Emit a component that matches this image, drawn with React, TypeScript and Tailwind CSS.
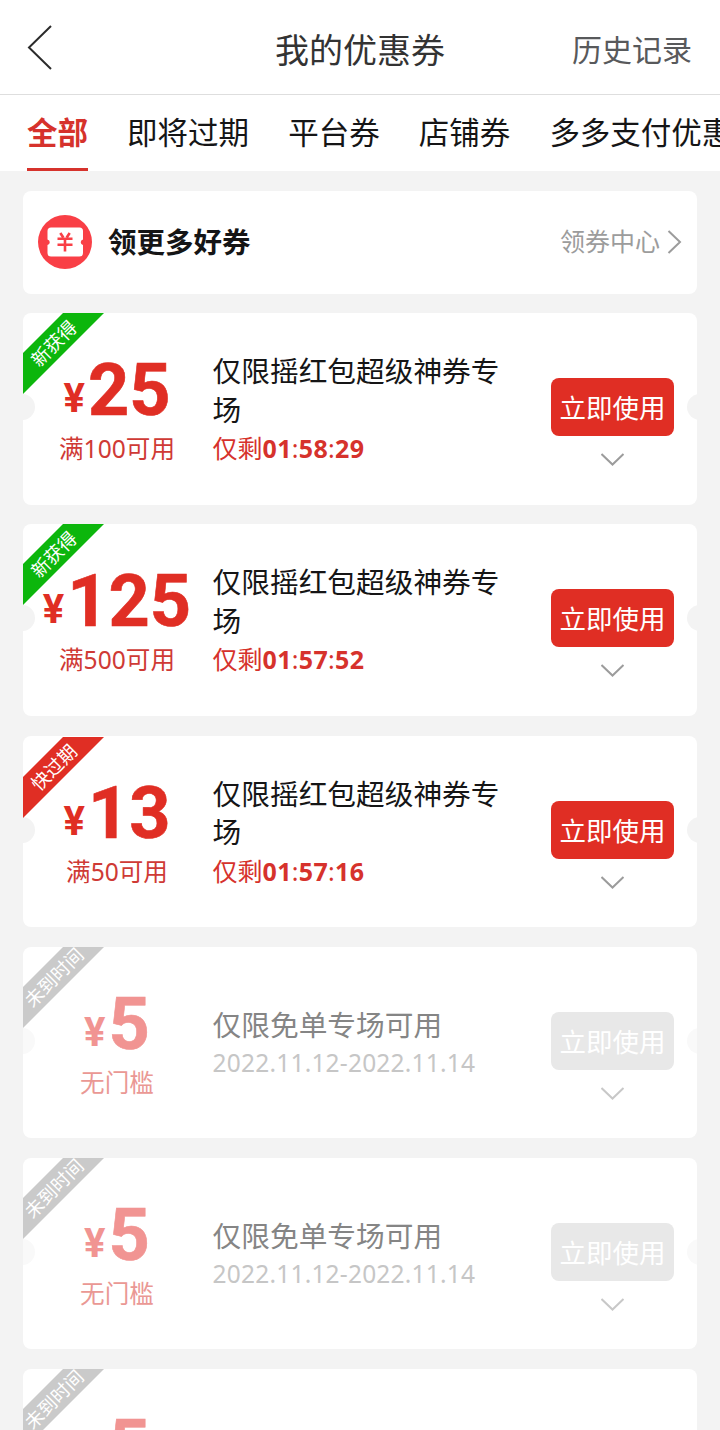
import { clsx } from 'clsx'

type Status = 'new' | 'expiring' | 'pending'

interface Coupon {
	id: number
	status: Status
	amount: string
	condition: string
	title: string
	countdown?: string
	period?: string
}

const TABS = ['全部', '即将过期', '平台券', '店铺券', '多多支付优惠']

const RIBBONS: Record<Status, { label: string; fill: string }> = {
	new: { label: '新获得', fill: 'fill-[#0cb60c]' },
	expiring: { label: '快过期', fill: 'fill-[#e02e24]' },
	pending: { label: '未到时间', fill: 'fill-[#cacaca]' },
}

const PENDING = {
	status: 'pending' as const,
	amount: '5',
	condition: '无门槛',
	title: '仅限免单专场可用',
	period: '2022.11.12-2022.11.14',
}

const COUPONS: Coupon[] = [
	{
		id: 1,
		status: 'new',
		amount: '25',
		condition: '满100可用',
		title: '仅限摇红包超级神券专场',
		countdown: '01:58:29',
	},
	{
		id: 2,
		status: 'new',
		amount: '125',
		condition: '满500可用',
		title: '仅限摇红包超级神券专场',
		countdown: '01:57:52',
	},
	{
		id: 3,
		status: 'expiring',
		amount: '13',
		condition: '满50可用',
		title: '仅限摇红包超级神券专场',
		countdown: '01:57:16',
	},
	{ id: 4, ...PENDING },
	{ id: 5, ...PENDING },
	{ id: 6, ...PENDING },
]

function Header() {
	return (
		<header className="grid h-[95px] grid-cols-[1fr_auto_1fr] items-center border-b border-[#dedede] bg-white pt-1.5 pr-7 pl-[27px]">
			<svg className="-mt-1.5 h-[46px] w-[27px]" viewBox="0 0 27 46" fill="none" stroke="#2b2b2b" strokeWidth="2">
				<path d="M24 2 2 23.500 24 45" />
			</svg>
			<h1 className="pl-px text-[34px] leading-none text-[#333]">我的优惠券</h1>
			<span className="justify-self-end text-[30px] leading-none text-[#58595b]">历史记录</span>
		</header>
	)
}

function Tabs() {
	return (
		<nav className="flex h-[76px] gap-[39.100px] overflow-hidden bg-white pl-[27px]">
			{TABS.map((tab, i) => (
				<button
					key={tab}
					type="button"
					className={clsx(
						'shrink-0 border-b-[3px] text-[30.500px] leading-[75px] whitespace-nowrap',
						i === 0 ? 'border-[#d6322c] font-bold text-[#d6322c]' : 'border-transparent text-[#151516]',
					)}
				>
					{tab}
				</button>
			))}
		</nav>
	)
}

function MoreCoupons() {
	return (
		<section className="flex h-[103px] items-center rounded-lg bg-white pr-[15px] pl-[15px]">
			<svg className="-mt-0.5 size-[54px]" viewBox="0 0 54 54" fill="none">
				<circle cx="27" cy="27" r="27" fill="#f93f46" />
				<path
					d="M13 12.500h28.500a3.500 3.500 0 0 1 3.500 3.500v8.500a2.800 2.800 0 0 0 0 5.500V38a3.500 3.500 0 0 1-3.500 3.500H13A3.500 3.500 0 0 1 9.500 38v-8a2.800 2.800 0 0 0 0-5.500V16a3.500 3.500 0 0 1 3.500-3.500Z"
					fill="#fff"
				/>
				<path d="m22.300 18 3 4.500M31.700 18l-3 4.500M19.500 23.800h15M19.500 29.800h15M27 23.500v13" stroke="#f93f46" strokeWidth="2.600" />
			</svg>
			<h2 className="ml-4 text-[28.500px] leading-none font-bold text-[#151516]">领更多好券</h2>
			<span className="-mt-0.5 ml-auto text-[25px] leading-none text-[#9c9c9c]">领券中心</span>
			<svg className="-mt-0.5 ml-[7px] h-[26px] w-[15px]" viewBox="0 0 15 26" fill="none" stroke="#9c9c9c" strokeWidth="2">
				<path d="m1.500 2 11.500 11L1.500 24" />
			</svg>
		</section>
	)
}

function Ribbon({ status }: { status: Status }) {
	const { label, fill } = RIBBONS[status]
	return (
		<svg className={clsx('absolute left-0 size-[82px]', status === 'expiring' ? 'top-px' : 'top-0')} viewBox="0 0 82 82">
			<path d="M40 0h41L0 81V40Z" className={fill} />
			<text x="30.500" y="30" transform="rotate(-45 30.500 30)" textAnchor="middle" dominantBaseline="central" className="fill-white text-[18.500px]">
				{label}
			</text>
		</svg>
	)
}

function Countdown({ value }: { value: string }) {
	const parts = value.split(':')
	return (
		<p className="text-[25px] leading-[38px] text-[#d6322c]">
			仅剩
			{parts.map((part, i) => (
				<span key={i} className="tracking-[0.300px]">
					{i > 0 && ':'}
					<b>{part}</b>
				</span>
			))}
		</p>
	)
}

function CouponCard({ coupon }: { coupon: Coupon }) {
	const pending = coupon.status === 'pending'
	const notch = clsx('absolute top-[81px] size-[26px] rounded-full', pending ? 'bg-[#f9f9f9]' : 'bg-[#f3f3f3]')

	return (
		<article className="relative flex h-[191.700px] shrink-0 overflow-hidden rounded-lg bg-white">
			<span className={clsx(notch, '-left-3.5')} />
			<span className={clsx(notch, '-right-4')} />
			<Ribbon status={coupon.status} />

			<div className={clsx('relative flex w-[188px] flex-col items-center pt-[38px]', pending ? 'text-[#f19492]' : 'text-[#e02e24]')}>
				<p className="flex h-[78px] items-start font-['Roboto',sans-serif] font-bold">
					<span className="mr-[3px] text-[40px] leading-[96px]">¥</span>
					<span className="text-[72px] leading-[80px] [-webkit-text-stroke:0.600px_currentColor]">{coupon.amount}</span>
				</p>
				<p className={clsx('text-[24.600px] leading-[39px]', pending ? 'text-[#ea9894]' : 'text-[#cf3a35]')}>{coupon.condition}</p>
			</div>

			<div className={clsx('w-[302px] pl-[1.600px]', pending ? 'pt-[59px]' : 'pt-[39px]')}>
				<h3 className={clsx('text-[28.700px] leading-[38.500px]', pending ? 'text-[#858585]' : 'text-[#151516]')}>{coupon.title}</h3>
				{coupon.countdown && <Countdown value={coupon.countdown} />}
				{coupon.period && (
					<p className="text-[24.500px] leading-[38px] tracking-[0.200px] whitespace-nowrap text-[#c6c6c6]">{coupon.period}</p>
				)}
			</div>

			<div className="mr-[23px] ml-auto flex w-[123px] flex-col items-center pt-[65px]">
				<button
					type="button"
					className={clsx('h-[58px] w-full rounded-lg text-[26.500px] leading-[60px] whitespace-nowrap text-white', pending ? 'bg-[#e8e8e8]' : 'bg-[#e02e24]')}
				>
					立即使用
				</button>
				<svg className={clsx('mt-[17px] h-[14px] w-6', pending ? 'stroke-[#c8c8c8]' : 'stroke-[#9c9c9c]')} viewBox="0 0 24 14" fill="none" strokeWidth="2">
					<path d="m.5 1 11 10.500L22.500 1" />
				</svg>
			</div>
		</article>
	)
}

export default function App() {
	return (
		<div className="h-[1430px] w-[720px] overflow-hidden bg-[#f3f3f3] font-['Noto_Sans','Noto_Sans_CJK_SC',sans-serif]" lang="zh-CN">
			<Header />
			<Tabs />
			<main className="flex flex-col gap-[19.400px] px-[23px] pt-5">
				<MoreCoupons />
				{COUPONS.map((coupon) => (
					<CouponCard key={coupon.id} coupon={coupon} />
				))}
			</main>
		</div>
	)
}
